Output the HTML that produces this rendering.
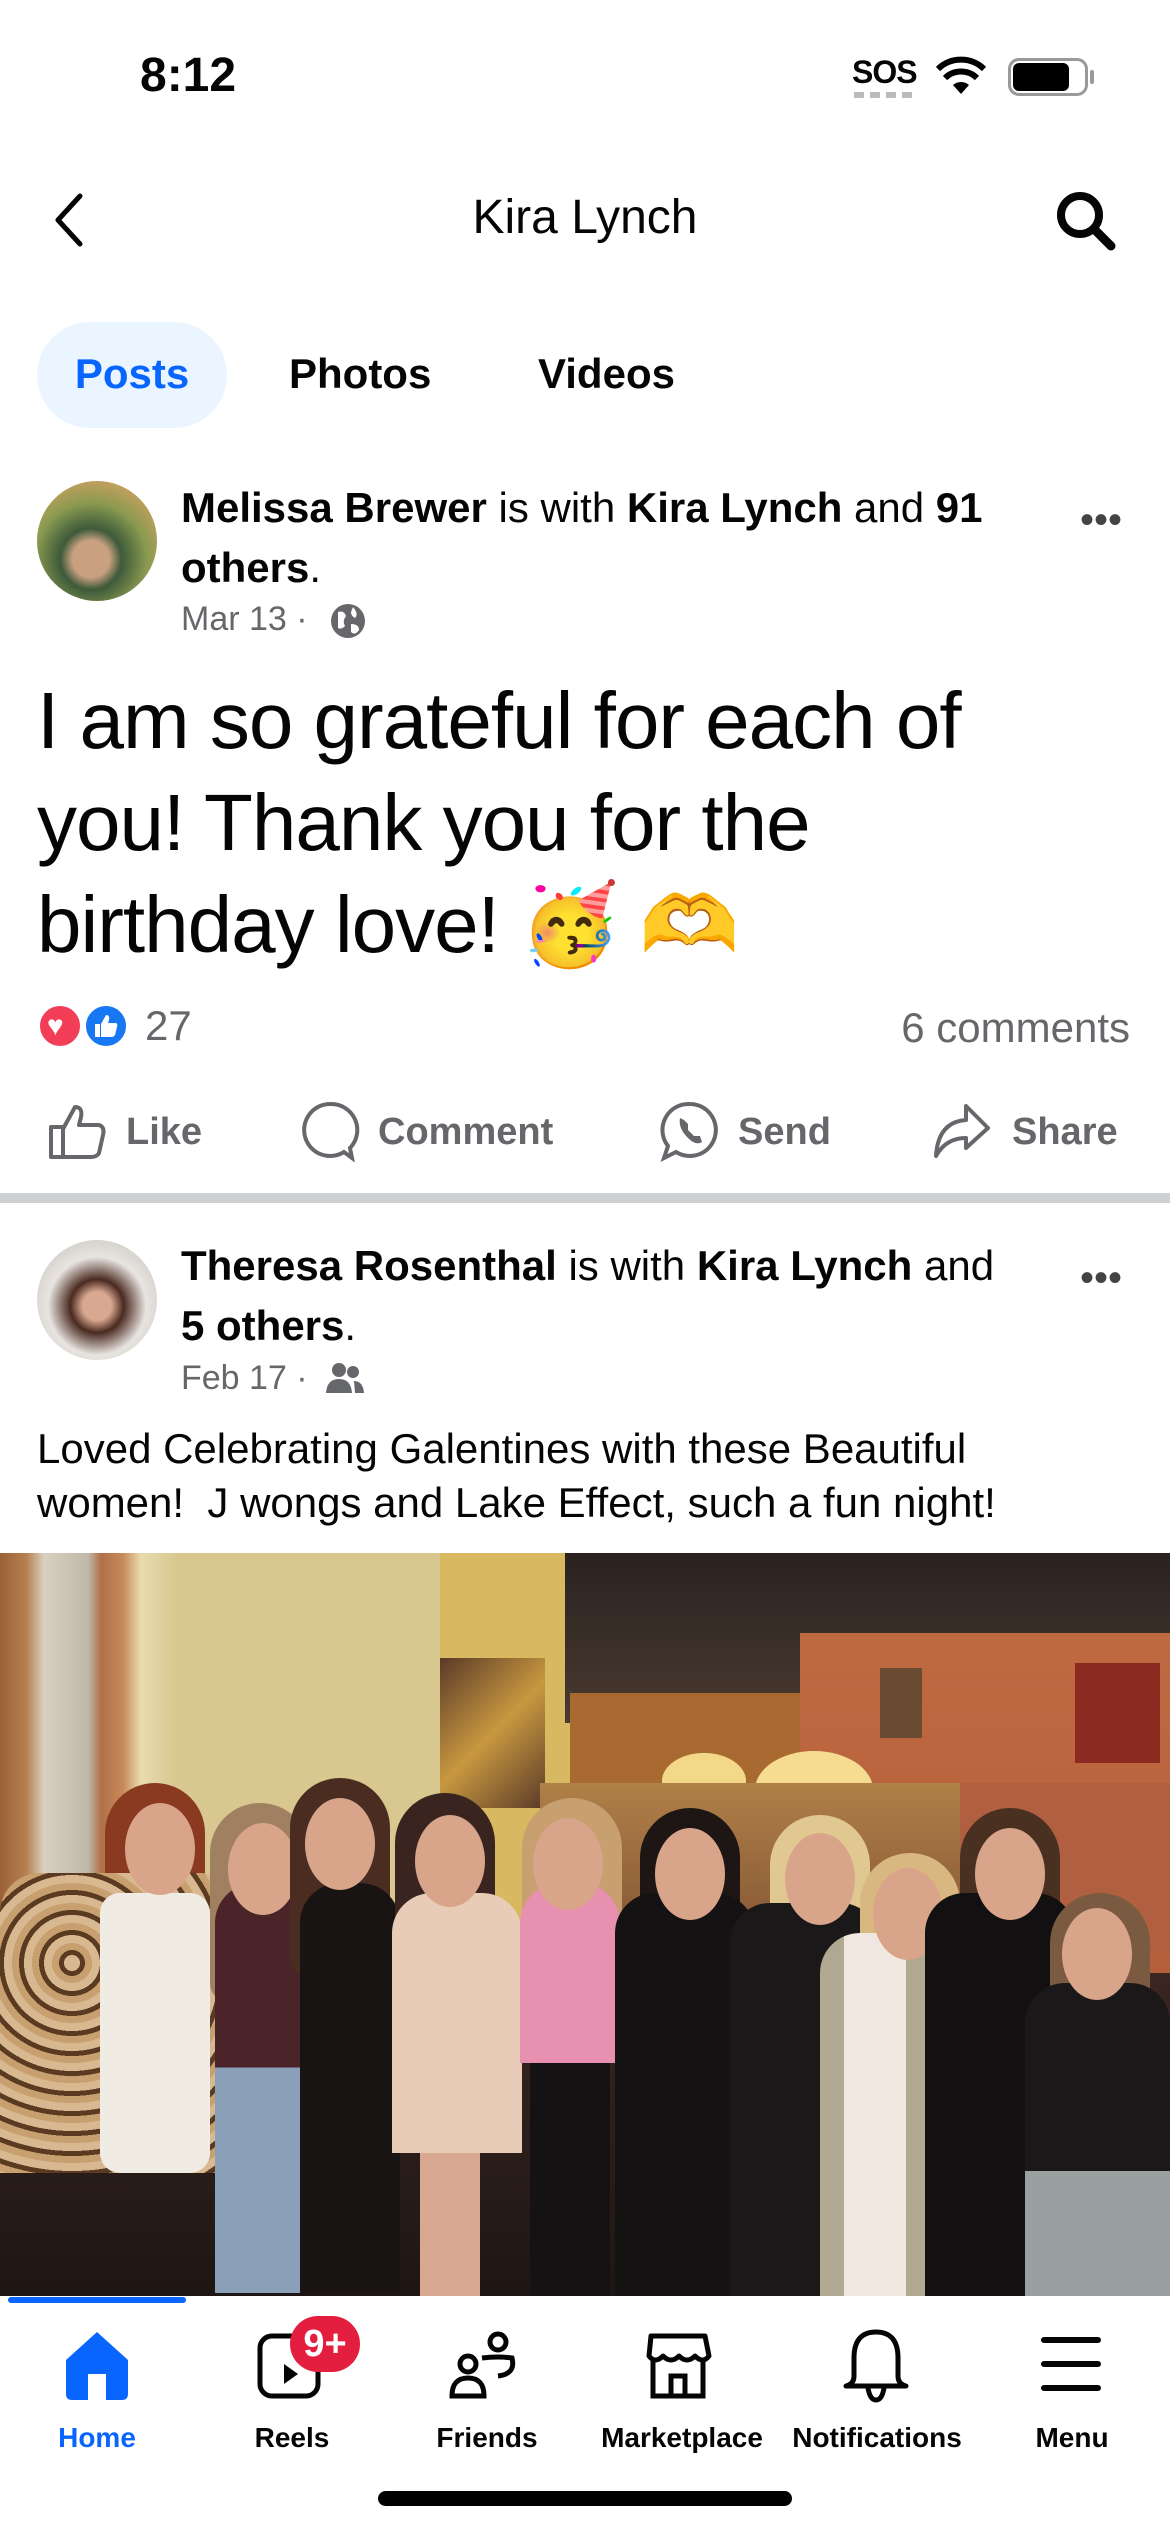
<!DOCTYPE html>
<html><head><meta charset="utf-8"><style>
*{margin:0;padding:0;box-sizing:border-box}
body{width:1170px;height:2532px;background:#fff;font-family:"Liberation Sans",Arial,sans-serif;color:#050505;position:relative;overflow:hidden}
.a{position:absolute;white-space:nowrap}
b{font-weight:700}
.g{color:#65676b}
.act{font-size:38px;color:#65676b;font-weight:700}
.nl{font-size:28px;font-weight:700;text-align:center;width:194px}
.h{position:absolute;width:70px;height:92px;border-radius:50%;background:#d9a58a}
.hair{position:absolute;width:100px;height:200px;border-radius:50px 50px 20px 20px}
.bd{position:absolute;border-radius:40px 40px 0 0}
</style></head><body>
<!-- status bar -->
<div class="a" style="left:140px;top:48px;font-size:48px;font-weight:700">8:12</div>
<div class="a" style="left:852px;top:54px;font-size:32px;font-weight:700;letter-spacing:-1px">SOS</div>
<div class="a" style="left:854px;top:92px;width:60px;height:6px;background:repeating-linear-gradient(90deg,#bbb 0 10px,transparent 10px 16px)"></div>
<svg class="a" style="left:935px;top:56px" width="52" height="40" viewBox="0 0 52 40"><path d="M26 38 L34 29 A12 12 0 0 0 18 29Z" fill="#000"/><path d="M10 22 A23 23 0 0 1 42 22" stroke="#000" stroke-width="6" fill="none"/><path d="M3 13 A33 33 0 0 1 49 13" stroke="#000" stroke-width="6" fill="none"/></svg>
<div class="a" style="left:1008px;top:58px;width:80px;height:38px;border:3px solid #999;border-radius:11px"></div>
<div class="a" style="left:1013px;top:63px;width:56px;height:28px;background:#000;border-radius:6px"></div>
<div class="a" style="left:1090px;top:70px;width:4px;height:14px;background:#999;border-radius:2px"></div>
<!-- header -->
<svg class="a" style="left:50px;top:190px" width="40" height="60" viewBox="0 0 40 60"><path d="M30 6 L8 30 L30 54" stroke="#050505" stroke-width="5" fill="none" stroke-linecap="round" stroke-linejoin="round"/></svg>
<div class="a" style="left:0;width:1170px;text-align:center;top:190px;font-size:48px">Kira Lynch</div>
<svg class="a" style="left:1053px;top:188px" width="66" height="66" viewBox="0 0 66 66"><circle cx="27" cy="27" r="19" stroke="#050505" stroke-width="8" fill="none"/><path d="M41 41 L58 58" stroke="#050505" stroke-width="9" stroke-linecap="round"/></svg>
<!-- tabs -->
<div class="a" style="left:37px;top:322px;width:190px;height:106px;border-radius:53px;background:#ebf5ff"></div>
<div class="a" style="left:37px;top:350px;width:190px;text-align:center;font-size:42px;font-weight:700;color:#0866ff">Posts</div>
<div class="a" style="left:289px;top:350px;font-size:42px;font-weight:700">Photos</div>
<div class="a" style="left:538px;top:350px;font-size:42px;font-weight:700">Videos</div>
<!-- post 1 -->
<div class="a" style="left:37px;top:481px;width:120px;height:120px;border-radius:50%;background:radial-gradient(circle at 45% 65%,#c9a080 0 18%,#3d5a3a 30%,#8a9a50 55%,#c9a060 80%)"></div>
<div class="a" style="left:181px;top:478px;font-size:42px;line-height:60px"><b>Melissa Brewer</b> is with <b>Kira Lynch</b> and <b>91</b><br><b>others</b>.</div>
<div class="a g" style="left:181px;top:600px;font-size:34px">Mar 13 · </div>
<svg class="a" style="left:329px;top:602px" width="38" height="38" viewBox="0 0 38 38"><circle cx="19" cy="19" r="17" fill="#65676b"/><path d="M9 10 Q15 8 17 14 Q13 19 16 24 Q12 28 9 26Z M24 5 Q30 12 26 16 Q22 14 22 10Z M22 22 Q30 22 30 28 Q26 34 22 30Z" fill="#fff"/></svg>
<div class="a" style="left:1080px;top:498px;font-size:40px;color:#444">•••</div>
<div class="a" style="left:37px;top:670px;font-size:80px;line-height:102px;letter-spacing:-1px">I am so grateful for each of<br>you! Thank you for the<br>birthday love! 🥳 🫶</div>
<div class="a" style="left:37px;top:1003px;width:46px;height:46px;border-radius:50%;background:#f33e58;border:3px solid #fff"></div>
<div class="a" style="left:83px;top:1003px;width:46px;height:46px;border-radius:50%;background:#1877f2;border:3px solid #fff"></div>
<div class="a" style="left:47px;top:1010px;color:#fff;font-size:28px">♥</div>
<svg class="a" style="left:92px;top:1012px" width="28" height="28" viewBox="0 0 28 28"><path d="M3 12 H8 V25 H3Z M9 12 L14 3 Q18 3 17 8 L16 11 H24 Q26 12 25 15 L23 23 Q22 25 19 25 H9Z" fill="#fff"/></svg>
<div class="a g" style="left:145px;top:1002px;font-size:42px">27</div>
<div class="a g" style="right:40px;top:1004px;font-size:42px">6 comments</div>
<svg class="a" style="left:47px;top:1103px" width="62" height="58" viewBox="0 0 62 58"><path d="M4 24 H16 V54 H4Z M16 26 L28 4 Q36 4 34 14 L32 22 H52 Q58 24 56 32 L52 50 Q50 54 44 54 H16" stroke="#65676b" stroke-width="4" fill="none" stroke-linejoin="round"/></svg>
<div class="a act" style="left:126px;top:1111px">Like</div>
<svg class="a" style="left:300px;top:1100px" width="60" height="62" viewBox="0 0 60 62"><path d="M30 4 A26 26 0 1 0 44 52 L52 58 L50 48 A26 26 0 0 0 30 4Z" stroke="#65676b" stroke-width="4" fill="none"/></svg>
<div class="a act" style="left:378px;top:1111px">Comment</div>
<svg class="a" style="left:660px;top:1100px" width="60" height="62" viewBox="0 0 60 62"><path d="M30 4 A26 26 0 1 1 16 52 L4 58 L8 46 A26 26 0 0 1 30 4Z" stroke="#65676b" stroke-width="4" fill="none"/><path d="M20 18 Q18 28 28 38 Q36 46 42 42 L40 36 L34 36 L28 30 L28 24 L24 20Z" fill="#65676b"/></svg>
<div class="a act" style="left:738px;top:1111px">Send</div>
<svg class="a" style="left:930px;top:1100px" width="62" height="62" viewBox="0 0 62 62"><path d="M36 6 L58 28 L36 48 V38 Q16 38 6 56 Q8 22 36 20Z" stroke="#65676b" stroke-width="4" fill="none" stroke-linejoin="round"/></svg>
<div class="a act" style="left:1012px;top:1111px">Share</div>
<div class="a" style="left:0;top:1193px;width:1170px;height:10px;background:#ced0d4"></div>
<!-- post 2 -->
<div class="a" style="left:37px;top:1240px;width:120px;height:120px;border-radius:50%;background:radial-gradient(circle at 50% 55%,#d8a890 0 16%,#4a2a20 30%,#e8e4e0 55%,#d0ccc8 80%)"></div>
<div class="a" style="left:181px;top:1236px;font-size:42px;line-height:60px"><b>Theresa Rosenthal</b> is with <b>Kira Lynch</b> and<br><b>5 others</b>.</div>
<div class="a g" style="left:181px;top:1359px;font-size:34px">Feb 17 · </div>
<svg class="a" style="left:325px;top:1361px" width="40" height="36" viewBox="0 0 40 36"><circle cx="14" cy="9" r="7" fill="#65676b"/><circle cx="28" cy="11" r="6" fill="#65676b"/><path d="M1 32 Q2 18 14 18 Q26 18 27 32Z M29 20 Q38 20 39 32 H30Z" fill="#65676b"/></svg>
<div class="a" style="left:1080px;top:1256px;font-size:40px;color:#444">•••</div>
<div class="a" style="left:37px;top:1422px;font-size:42px;line-height:54px">Loved Celebrating Galentines with these Beautiful<br>women!&nbsp; J wongs and Lake Effect, such a fun night!</div>
<!-- photo -->
<div class="a" style="left:0;top:1553px;width:1170px;height:743px;overflow:hidden;background:#3a2820">
 <div class="a" style="left:0;top:0;width:440px;height:743px;background:linear-gradient(90deg,#9a6038 0,#b88050 6%,#d8d0c0 10%,#c0b8a8 20%,#b07048 23%,#c88a58 28%,#e8dcb0 32%,#d8c890 40%)"></div>
 <div class="a" style="left:440px;top:0;width:130px;height:450px;background:#d8b860"></div>
 <div class="a" style="left:440px;top:105px;width:105px;height:150px;background:linear-gradient(135deg,#5a3a28,#c89840 50%,#5a3a28)"></div>
 <div class="a" style="left:565px;top:0;width:605px;height:170px;background:linear-gradient(180deg,#2a2220,#4a3a30)"></div>
 <div class="a" style="left:570px;top:140px;width:230px;height:200px;background:#a86a30"></div>
 <div class="a" style="left:800px;top:80px;width:370px;height:470px;background:linear-gradient(180deg,#c06a42,#b05a38)"></div>
 <div class="a" style="left:662px;top:200px;width:84px;height:56px;border-radius:50%;background:#f4d88a"></div>
 <div class="a" style="left:755px;top:198px;width:118px;height:78px;border-radius:50%;background:#f6dc90"></div>
 <div class="a" style="left:1075px;top:110px;width:85px;height:100px;background:#8a2a20"></div>
 <div class="a" style="left:880px;top:115px;width:42px;height:70px;background:#6a4a30"></div>
 <div class="a" style="left:540px;top:230px;width:440px;height:200px;background:linear-gradient(180deg,#b08048,#7a4a30)"></div>
 <div class="a" style="left:960px;top:230px;width:210px;height:170px;background:#b06040"></div>
 <div class="a" style="left:0;top:420px;width:1170px;height:323px;background:linear-gradient(180deg,#3a2620,#1e1614)"></div>
 <!-- people -->
 <div class="hair" style="left:105px;top:230px;background:#8a3a20"></div>
 <div class="bd" style="left:0;top:320px;width:240px;height:300px;background:repeating-radial-gradient(circle at 30% 30%,#d8b890 0 8px,#5a3a20 8px 13px,#c8a070 13px 20px)"></div>
 <div class="bd" style="left:100px;top:340px;width:110px;height:280px;background:#f0ece4;border-radius:20px"></div>
 <div class="h" style="left:125px;top:250px"></div>
 <div class="hair" style="left:210px;top:250px;background:#a08060"></div>
 <div class="bd" style="left:215px;top:330px;width:110px;height:410px;background:linear-gradient(180deg,#4a2428 0 45%,#8aa0b8 45%)"></div>
 <div class="h" style="left:228px;top:270px"></div>
 <div class="hair" style="left:290px;top:225px;background:#4a2c20"></div>
 <div class="bd" style="left:300px;top:330px;width:100px;height:410px;background:#181414"></div>
 <div class="h" style="left:305px;top:245px"></div>
 <div class="hair" style="left:395px;top:240px;background:#3a2420"></div>
 <div class="bd" style="left:392px;top:340px;width:130px;height:260px;background:#e8ccb8"></div>
 <div class="bd" style="left:420px;top:600px;width:60px;height:143px;background:#d8a890;border-radius:0"></div>
 <div class="h" style="left:415px;top:262px"></div>
 <div class="hair" style="left:522px;top:245px;background:#c8a070"></div>
 <div class="bd" style="left:520px;top:330px;width:100px;height:180px;background:#e890b0"></div>
 <div class="bd" style="left:530px;top:510px;width:80px;height:233px;background:#141212;border-radius:0"></div>
 <div class="h" style="left:533px;top:265px"></div>
 <div class="hair" style="left:640px;top:255px;background:#1e1614"></div>
 <div class="bd" style="left:615px;top:340px;width:140px;height:403px;background:#141212"></div>
 <div class="h" style="left:655px;top:275px"></div>
 <div class="hair" style="left:770px;top:262px;background:#e0c890"></div>
 <div class="bd" style="left:730px;top:350px;width:150px;height:393px;background:#1a1818"></div>
 <div class="h" style="left:785px;top:280px"></div>
 <div class="hair" style="left:860px;top:300px;background:#d8b880"></div>
 <div class="bd" style="left:820px;top:380px;width:110px;height:363px;background:linear-gradient(90deg,#b0a890 0 22%,#f0e8e0 22% 78%,#b0a890 78%)"></div>
 <div class="h" style="left:873px;top:315px"></div>
 <div class="hair" style="left:960px;top:255px;background:#4a3020"></div>
 <div class="bd" style="left:925px;top:340px;width:150px;height:403px;background:#121010"></div>
 <div class="h" style="left:975px;top:275px"></div>
 <div class="hair" style="left:1050px;top:340px;background:#7a5a40"></div>
 <div class="bd" style="left:1025px;top:430px;width:145px;height:313px;background:linear-gradient(180deg,#1a1818 0 60%,#9aa0a0 60%)"></div>
 <div class="h" style="left:1062px;top:355px"></div>
</div>
<!-- bottom nav -->
<div class="a" style="left:8px;top:2297px;width:178px;height:6px;background:#0866ff;border-radius:3px"></div>
<svg class="a" style="left:62px;top:2330px" width="70" height="72" viewBox="0 0 70 72"><path d="M35 2 L66 30 V64 Q66 70 60 70 H44 V44 H26 V70 H10 Q4 70 4 64 V30Z" fill="#0866ff"/></svg>
<svg class="a" style="left:256px;top:2330px" width="70" height="72" viewBox="0 0 70 72"><rect x="4" y="6" width="58" height="60" rx="12" stroke="#050505" stroke-width="5" fill="none"/><path d="M28 34 L42 44 L28 54Z" fill="#050505"/></svg>
<div class="a" style="left:290px;top:2316px;width:70px;height:56px;border-radius:28px;background:#e41e3f;color:#fff;font-size:38px;font-weight:700;text-align:center;line-height:56px">9+</div>
<svg class="a" style="left:448px;top:2330px" width="72" height="72" viewBox="0 0 72 72"><circle cx="20" cy="34" r="8" stroke="#050505" stroke-width="5" fill="none"/><circle cx="50" cy="12" r="8" stroke="#050505" stroke-width="5" fill="none"/><path d="M4 66 Q4 48 20 48 Q36 48 36 66Z" stroke="#050505" stroke-width="5" fill="none"/><path d="M34 28 Q50 26 64 28 Q68 44 50 46" stroke="#050505" stroke-width="5" fill="none"/></svg>
<svg class="a" style="left:643px;top:2330px" width="72" height="72" viewBox="0 0 72 72"><path d="M8 6 H62 L66 26 Q60 34 52 26 Q44 34 36 26 Q28 34 20 26 Q12 34 6 26Z" stroke="#050505" stroke-width="5" fill="none" stroke-linejoin="round"/><path d="M10 30 V66 H60 V30 M28 66 V46 H42 V66" stroke="#050505" stroke-width="5" fill="none"/></svg>
<svg class="a" style="left:840px;top:2328px" width="72" height="76" viewBox="0 0 72 76"><path d="M36 4 Q14 4 14 30 V48 Q14 56 6 58 H66 Q58 56 58 48 V30 Q58 4 36 4Z" stroke="#050505" stroke-width="5" fill="none" stroke-linejoin="round"/><path d="M28 60 Q30 72 36 72 Q42 72 44 60" stroke="#050505" stroke-width="5" fill="none"/></svg>
<svg class="a" style="left:1038px;top:2334px" width="66" height="62" viewBox="0 0 66 62"><path d="M6 6 H60 M6 30 H60 M6 54 H60" stroke="#050505" stroke-width="6" stroke-linecap="round"/></svg>
<div class="a nl" style="left:0;top:2422px;color:#0866ff">Home</div>
<div class="a nl" style="left:195px;top:2422px">Reels</div>
<div class="a nl" style="left:390px;top:2422px">Friends</div>
<div class="a nl" style="left:585px;top:2422px">Marketplace</div>
<div class="a nl" style="left:780px;top:2422px">Notifications</div>
<div class="a nl" style="left:975px;top:2422px">Menu</div>
<div class="a" style="left:378px;top:2491px;width:414px;height:15px;border-radius:8px;background:#000"></div>
</body></html>
